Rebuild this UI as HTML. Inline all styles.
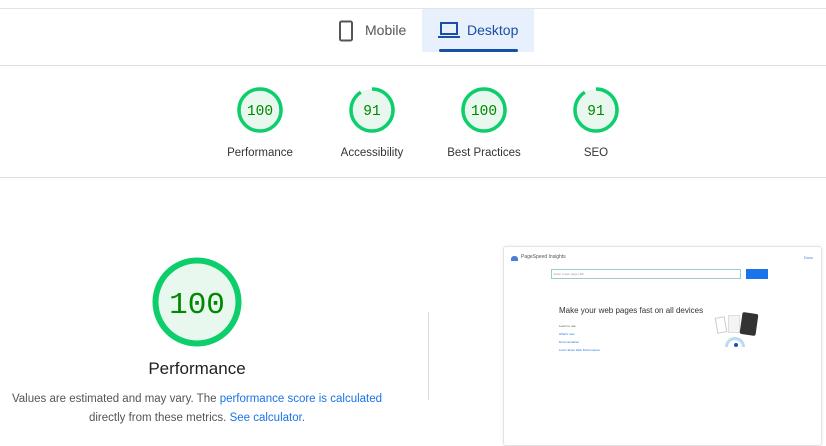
<!DOCTYPE html>
<html><head><style>
*{margin:0;padding:0;box-sizing:border-box}
body{width:826px;height:442px;background:#fff;font-family:"Liberation Sans",sans-serif;position:relative;overflow:hidden;color:#212121}
.abs{position:absolute}
.g text{font-family:"Liberation Mono",monospace;fill:#008800}
.lbl{position:absolute;font-size:11.5px;color:#333;text-align:center;width:120px}
a{color:#1a73e8;text-decoration:none}
</style></head><body>
<div class="abs" style="left:0;top:8px;width:826px;height:1px;background:#e4e4e4"></div>
<div class="abs" style="left:422px;top:9px;width:112px;height:43px;background:#e8f0fe"></div>
<div class="abs" style="left:439px;top:49px;width:79px;height:3px;background:#174ea6;border-radius:2px"></div>
<svg class="abs" style="left:338px;top:20px" width="18" height="22"><rect x="2" y="1.5" width="12" height="19" rx="1.5" fill="none" stroke="#555" stroke-width="2"/></svg>
<div class="abs" style="left:365px;top:22px;font-size:14px;color:#555">Mobile</div>
<svg class="abs" style="left:438px;top:21px" width="22" height="20"><rect x="3" y="2" width="16" height="11" fill="none" stroke="#174ea6" stroke-width="2"/><rect x="0" y="15" width="22" height="2" fill="#174ea6"/></svg>
<div class="abs" style="left:467px;top:22px;font-size:14px;color:#174ea6">Desktop</div>
<div class="abs" style="left:0;top:65px;width:826px;height:1px;background:#e0e0e0"></div>

<svg class="abs g" style="left:0;top:0" width="826" height="180">
<g><circle cx="260" cy="110" r="21" fill="#e8f8ee" stroke="#0cce6b" stroke-width="3.5"/><text x="260" y="115" text-anchor="middle" font-size="14.5">100</text></g>
<g><circle cx="372" cy="110" r="21" fill="#e8f8ee"/><circle cx="372" cy="110" r="21" fill="none" stroke="#0cce6b" stroke-width="3.5" stroke-dasharray="120 132" transform="rotate(-90 372 110)"/><text x="372" y="115" text-anchor="middle" font-size="14.5">91</text></g>
<g><circle cx="484" cy="110" r="21" fill="#e8f8ee" stroke="#0cce6b" stroke-width="3.5"/><text x="484" y="115" text-anchor="middle" font-size="14.5">100</text></g>
<g><circle cx="596" cy="110" r="21" fill="#e8f8ee"/><circle cx="596" cy="110" r="21" fill="none" stroke="#0cce6b" stroke-width="3.5" stroke-dasharray="120 132" transform="rotate(-90 596 110)"/><text x="596" y="115" text-anchor="middle" font-size="14.5">91</text></g>
</svg>
<div class="lbl" style="left:200px;top:147px">Performance</div>
<div class="lbl" style="left:312px;top:147px">Accessibility</div>
<div class="lbl" style="left:424px;top:147px">Best Practices</div>
<div class="lbl" style="left:536px;top:147px">SEO</div>
<div class="abs" style="left:0;top:177px;width:826px;height:1px;background:#e0e0e0"></div>

<svg class="abs g" style="left:140px;top:245px" width="115" height="115"><circle cx="57" cy="57" r="41.5" fill="#e8f8ee" stroke="#0cce6b" stroke-width="6"/><text x="57" y="68" text-anchor="middle" font-size="31">100</text></svg>
<div class="abs" style="left:97px;top:359px;width:200px;text-align:center;font-size:17px;color:#212121">Performance</div>
<div class="abs" style="left:0;top:390px;width:394px;text-align:center;font-size:11.5px;line-height:19px;color:#555">Values are estimated and may vary. The <a>performance score is calculated</a><br>directly from these metrics. <a>See calculator.</a></div>
<div class="abs" style="left:428px;top:312px;width:1px;height:88px;background:#ddd"></div>

<div class="abs" style="left:503px;top:246px;width:319px;height:200px;border:1px solid #e4e4e4;border-radius:3px;box-shadow:0 0 3px rgba(0,0,0,.08)">
<div class="abs" style="left:7px;top:9px;width:7px;height:5px;background:#4a7fd4;border-radius:3px 3px 0 0"></div>
<div class="abs" style="left:17px;top:7px;font-size:5px;color:#555">PageSpeed Insights</div>
<div class="abs" style="right:8px;top:8px;font-size:4px;color:#4a7fd4">Docs</div>
<div class="abs" style="left:47px;top:22px;width:190px;height:10px;border:1px solid #9cc;font-size:3px;color:#999;padding:2px">Enter a web page URL</div>
<div class="abs" style="left:242px;top:22px;width:22px;height:10px;background:#1a73e8"></div>
<div class="abs" style="left:55px;top:59px;font-size:8px;color:#333">Make your web pages fast on all devices</div>
<div class="abs" style="left:55px;top:75px;font-size:3px;color:#555;line-height:8px">Learn to use<br><span style="color:#1a73e8">What's new<br>Documentation<br>Learn about Web Performance</span></div>
<div class="abs" style="left:212px;top:70px;width:10px;height:16px;border:1px solid #ccc;transform:rotate(-10deg)"></div>
<div class="abs" style="left:224px;top:68px;width:12px;height:18px;background:#f4f4f4;border:1px solid #ddd"></div>
<div class="abs" style="left:237px;top:66px;width:16px;height:22px;background:#333;border-radius:2px;transform:rotate(8deg)"></div>
<div class="abs" style="left:221px;top:90px;width:20px;height:10px;border:3px solid #b8dcf0;border-bottom:none;border-radius:10px 10px 0 0"></div>
<div class="abs" style="left:230px;top:96px;width:4px;height:4px;background:#1a4fd0;border-radius:50%"></div>
</div>
</body></html>
